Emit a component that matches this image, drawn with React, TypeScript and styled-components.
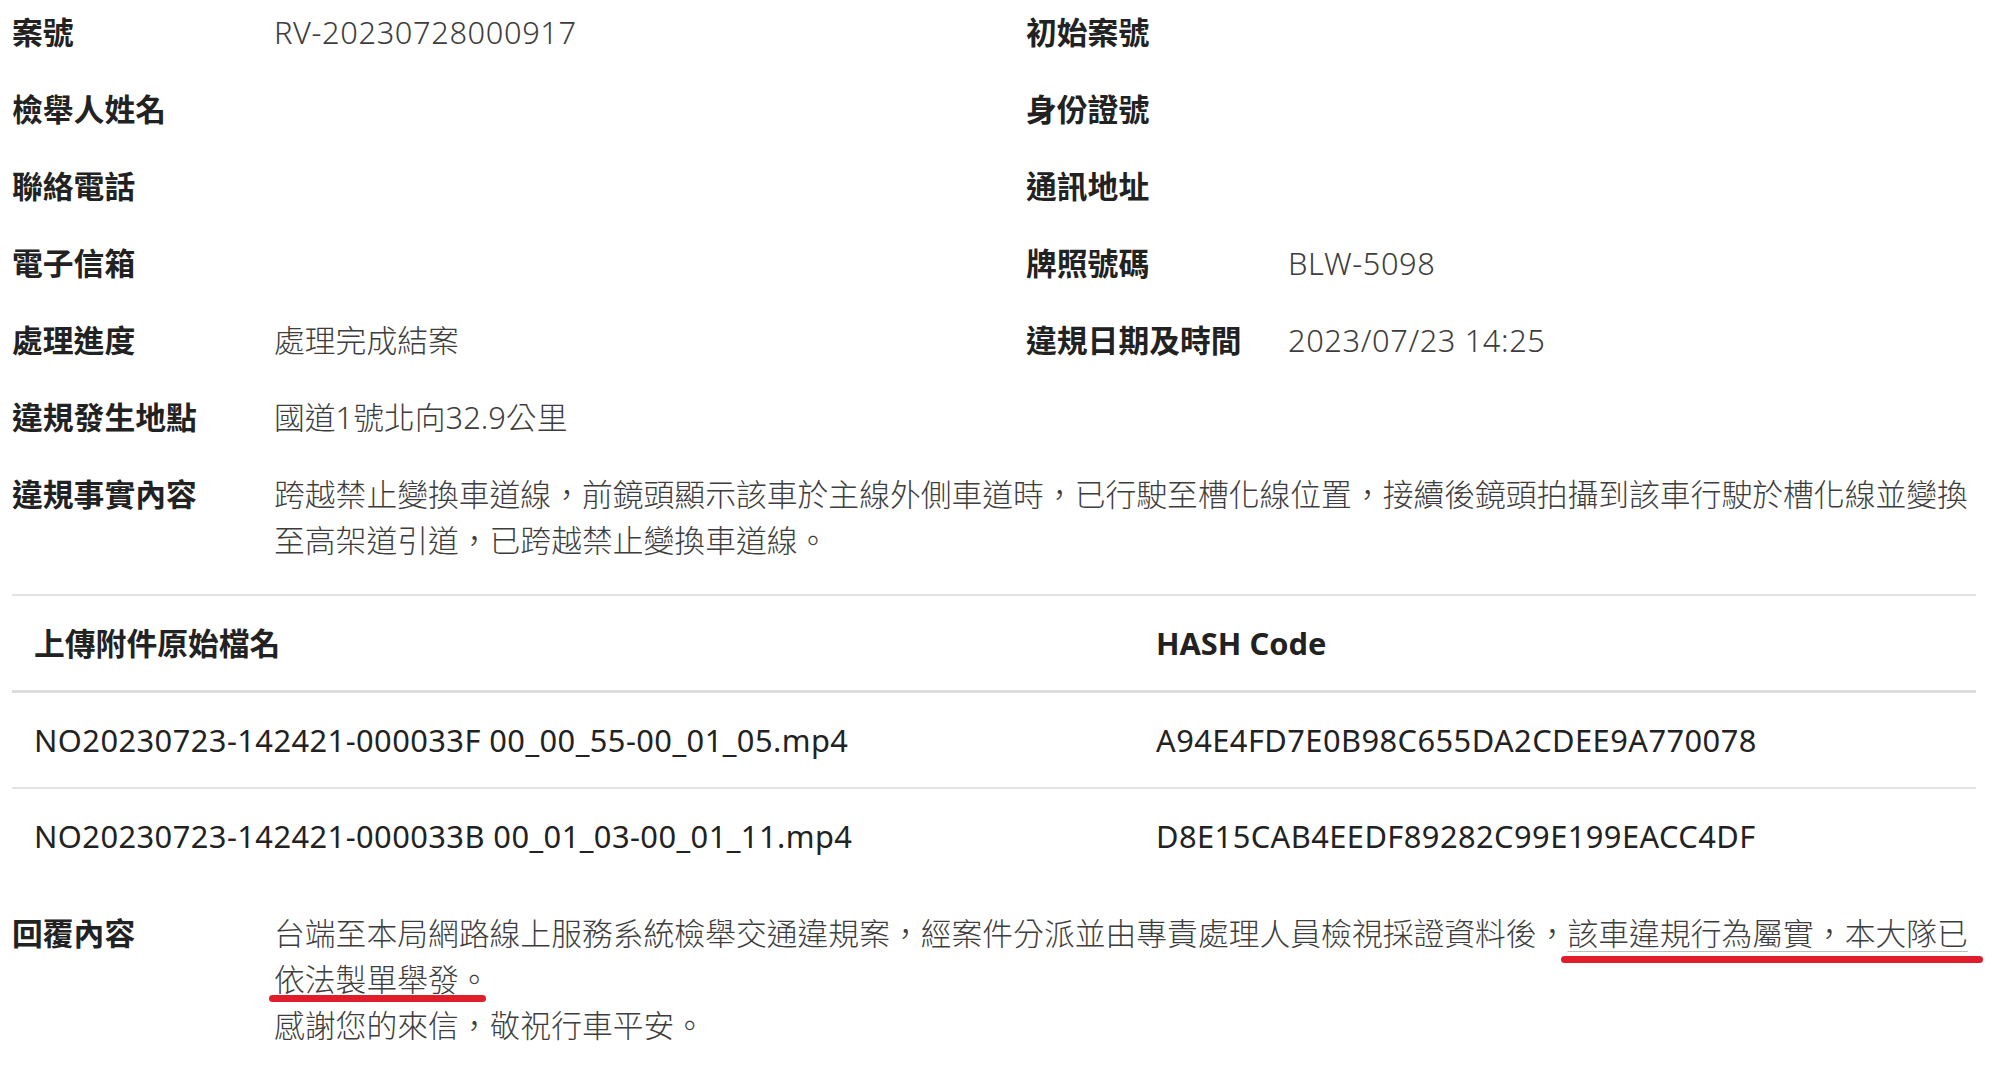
import React from 'react';
import styled, { createGlobalStyle } from 'styled-components';

const Global = createGlobalStyle`
  html, body { margin: 0; padding: 0; background: #ffffff; }
  body { font-family: "Noto Sans", "Noto Sans CJK TC", sans-serif; }
`;

const Page = styled.div`
  padding: 9px 17px 40px 12px;
  font-size: 30.8px;
  line-height: 46px;
  color: #222222;
`;

const InfoList = styled.div`
  display: flex;
  flex-direction: column;
  gap: 31px;
`;

const InfoRow = styled.div<{ $full?: boolean }>`
  display: grid;
  grid-template-columns: ${(p) => (p.$full ? '262px 1fr' : '262px 752px 262px 1fr')};
`;

const Label = styled.div`
  font-weight: 700;
  color: #222222;
`;

const Value = styled.div<{ $latin?: boolean }>`
  font-weight: 300;
  color: #3d3d3d;
  letter-spacing: ${(p) => (p.$latin ? '0.6px' : '0')};
`;

const Table = styled.table`
  width: 100%;
  margin-top: 31px;
  border-collapse: collapse;
  table-layout: fixed;
`;

const HeadCell = styled.th`
  text-align: left;
  font-weight: 700;
  color: #222222;
  padding: 24px 22px;
  border-top: 2px solid #e3e3e3;
  border-bottom: 3px solid #dddddd;
`;

const Cell = styled.td`
  font-weight: 400;
  color: #222222;
  padding: 24px 22px;
  border-top: 2px solid #e3e3e3;
  white-space: nowrap;
  letter-spacing: 0.45px;
`;

const ReplyRow = styled.div`
  display: grid;
  grid-template-columns: 262px 1fr;
  margin-top: 27px;
`;

const ReplyValue = styled.div`
  position: relative;
  font-weight: 300;
  color: #3d3d3d;
`;

const Marked = styled.span`
  text-decoration: underline;
  text-decoration-color: #bdbdbd;
  text-decoration-thickness: 1px;
  text-underline-offset: 6px;
`;

const RedMark = styled.span<{ $left: number; $top: number; $width: number }>`
  position: absolute;
  left: ${(p) => p.$left}px;
  top: ${(p) => p.$top}px;
  width: ${(p) => p.$width}px;
  height: 7px;
  border-radius: 4px;
  background: #e01e2b;
  pointer-events: none;
`;

export default function App() {
  return (
    <Page lang="zh-TW">
      <Global />
      <InfoList>
        <InfoRow>
          <Label>案號</Label>
          <Value $latin>RV-20230728000917</Value>
          <Label>初始案號</Label>
          <Value></Value>
        </InfoRow>
        <InfoRow>
          <Label>檢舉人姓名</Label>
          <Value></Value>
          <Label>身份證號</Label>
          <Value></Value>
        </InfoRow>
        <InfoRow>
          <Label>聯絡電話</Label>
          <Value></Value>
          <Label>通訊地址</Label>
          <Value></Value>
        </InfoRow>
        <InfoRow>
          <Label>電子信箱</Label>
          <Value></Value>
          <Label>牌照號碼</Label>
          <Value $latin>BLW-5098</Value>
        </InfoRow>
        <InfoRow>
          <Label>處理進度</Label>
          <Value>處理完成結案</Value>
          <Label>違規日期及時間</Label>
          <Value $latin>2023/07/23 14:25</Value>
        </InfoRow>
        <InfoRow $full>
          <Label>違規發生地點</Label>
          <Value>國道1號北向32.9公里</Value>
        </InfoRow>
        <InfoRow $full>
          <Label>違規事實內容</Label>
          <Value>
            跨越禁止變換車道線，前鏡頭顯示該車於主線外側車道時，已行駛至槽化線位置，接續後鏡頭拍攝到該車行駛於槽化線並變換至高架道引道，已跨越禁止變換車道線。
          </Value>
        </InfoRow>
      </InfoList>

      <Table>
        <colgroup>
          <col style={{ width: '1122px' }} />
          <col />
        </colgroup>
        <thead>
          <tr>
            <HeadCell>上傳附件原始檔名</HeadCell>
            <HeadCell>HASH Code</HeadCell>
          </tr>
        </thead>
        <tbody>
          <tr>
            <Cell>NO20230723-142421-000033F 00_00_55-00_01_05.mp4</Cell>
            <Cell>A94E4FD7E0B98C655DA2CDEE9A770078</Cell>
          </tr>
          <tr>
            <Cell>NO20230723-142421-000033B 00_01_03-00_01_11.mp4</Cell>
            <Cell>D8E15CAB4EEDF89282C99E199EACC4DF</Cell>
          </tr>
        </tbody>
      </Table>

      <ReplyRow>
        <Label>回覆內容</Label>
        <ReplyValue>
          台端至本局網路線上服務系統檢舉交通違規案，經案件分派並由專責處理人員檢視採證資料後，
          <Marked>該車違規行為屬實，本大隊已依法製單舉發</Marked>。
          <br />
          感謝您的來信，敬祝行車平安。
          <RedMark $left={1287} $top={46} $width={422} />
          <RedMark $left={-5} $top={85} $width={217} />
        </ReplyValue>
      </ReplyRow>
    </Page>
  );
}
